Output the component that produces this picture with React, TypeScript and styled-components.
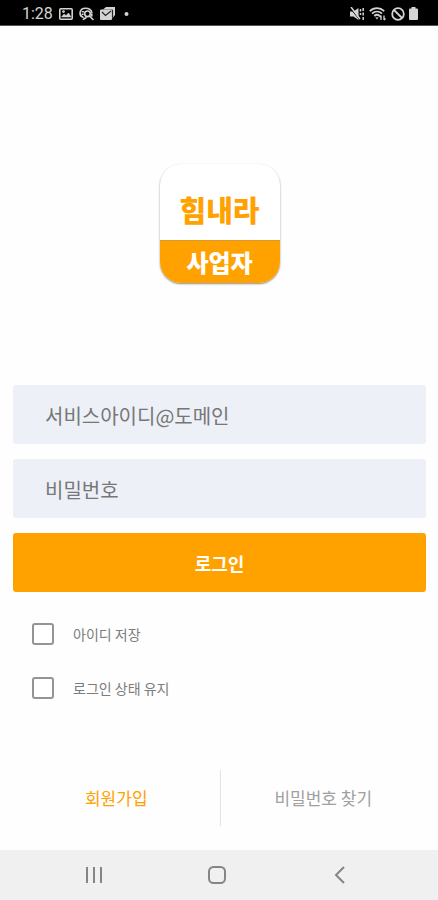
import React from "react";
import styled, { createGlobalStyle } from "styled-components";

const ORANGE = "#ffa200";

const GlobalStyle = createGlobalStyle`
  *, *::before, *::after { box-sizing: border-box; }
  body {
    margin: 0;
    background: #fefefe;
    font-family: "Noto Sans CJK KR", "Noto Sans", sans-serif;
  }
`;

const Screen = styled.div`
  display: flex;
  flex-direction: column;
  min-height: 100vh;
`;

const StatusBar = styled.header`
  display: flex;
  align-items: center;
  justify-content: space-between;
  height: 26px;
  padding: 2px 20px 0 22px;
  background: #000;
  border-bottom: 1px solid #555;
  color: #d4d4d4;
`;

const StatusGroup = styled.div<{ $gap: number }>`
  display: flex;
  align-items: center;
  gap: ${(p) => p.$gap}px;
`;

const Clock = styled.time`
  font: 16px/24px Roboto, sans-serif;
`;

const Main = styled.main`
  flex: 1;
  display: flex;
  flex-direction: column;
  padding: 138px 12px 24px 13px;
`;

const Logo = styled.h1`
  align-self: center;
  display: flex;
  flex-direction: column;
  width: 120px;
  height: 119px;
  margin: 0;
  overflow: hidden;
  border-radius: 21px;
  background: #fff;
  box-shadow: 0 1px 2px rgba(0, 0, 0, 0.45);
  font-weight: 900;
  text-align: center;
`;

const LogoTop = styled.span`
  flex: 1;
  padding-top: 14px;
  color: ${ORANGE};
  font-size: 29px;
  line-height: 62px;
`;

const LogoBottom = styled.span`
  height: 43px;
  border-top: 1px solid #d99a2b;
  background: ${ORANGE};
  color: #fff;
  font-size: 24px;
  line-height: 42px;
`;

const Form = styled.form`
  display: flex;
  flex-direction: column;
  margin-top: 102px;
`;

const Field = styled.input`
  width: 100%;
  height: 59px;
  margin-bottom: 15px;
  padding: 2px 32px 0;
  border: 0;
  border-radius: 3px;
  background: #edf0f7;
  color: #333;
  font: inherit;
  font-size: 20px;
  &::placeholder { color: #777; opacity: 1; }
`;

const LoginButton = styled.button`
  height: 59px;
  border: 0;
  border-radius: 3px;
  background: ${ORANGE};
  color: #fff;
  font: inherit;
  font-size: 18px;
  font-weight: 700;
`;

const Options = styled.div`
  display: flex;
  flex-direction: column;
  align-items: flex-start;
  gap: 30px;
  padding: 30px 19px 0;
`;

const Option = styled.label`
  display: flex;
  align-items: center;
  gap: 19px;
  color: #7c7c7c;
  font-size: 14px;
  line-height: 24px;
`;

const Checkbox = styled.input`
  appearance: none;
  width: 22px;
  height: 22px;
  margin: 0;
  border: 2px solid #949494;
  border-radius: 3px;
  background: #fff;
  &:checked { background: ${ORANGE}; }
`;

const Links = styled.nav`
  display: grid;
  grid-template-columns: 1fr 1fr;
  margin-top: auto;
`;

const FooterLink = styled.a<{ $primary?: boolean }>`
  color: ${(p) => (p.$primary ? ORANGE : "#a0a0a0")};
  font-size: 17px;
  line-height: 56px;
  text-align: center;
  text-decoration: none;
  & + & { border-left: 1px solid #e2e2e2; }
`;

const SystemBar = styled.nav`
  display: flex;
  align-items: center;
  justify-content: center;
  gap: 99px;
  height: 50px;
  padding-right: 4px;
  background: #f0f0f0;
`;

const SystemButton = styled.button`
  display: flex;
  padding: 0;
  border: 0;
  background: none;
  color: #858585;
`;

const StatusLeft = () => (
  <StatusGroup $gap={6}>
    <Clock>1:28</Clock>
    <svg width="14" height="12" viewBox="0 0 14 12" fill="none" stroke="currentColor" strokeWidth="1.6">
      <rect x="0.8" y="0.8" width="12.4" height="10.4" rx="1" />
      <path d="M2.5 9 5 6l2 1.5L9.5 5 12 9z" fill="currentColor" strokeWidth="0.5" />
      <circle cx="4.5" cy="3.6" r="0.6" />
    </svg>
    <svg width="15" height="14" viewBox="0 0 15 14" fill="none" stroke="currentColor" strokeWidth="1.6" strokeLinecap="round">
      <path d="M4 10.2C1.5 9.5.8 7.2 1.2 5 1.7 2.5 3.5 1.2 6.5 1.2c3.2 0 5.8 1.3 6.3 4.3" />
      <circle cx="8.5" cy="6.8" r="2.8" />
      <path d="m10.7 9.2 3.3 3.3M3.5 4.8h1M3.2 7.3h.8M4.5 12.3 7 10.8M12.8 7v2" />
    </svg>
    <svg width="15" height="13" viewBox="0 0 15 13" fill="currentColor">
      <path d="M3 2.5 6 0h9v8l-2.5 3V2.5z" />
      <rect y="2.5" width="12" height="10.5" rx="1" />
      <path d="m2 5 3.5 3.5L11 4M12.5 3v7" fill="none" stroke="#222" strokeWidth="1.2" />
    </svg>
    <svg width="12" height="6" viewBox="0 0 12 6" fill="currentColor">
      <circle cx="5.5" cy="3" r="2" />
    </svg>
  </StatusGroup>
);

const StatusRight = () => (
  <StatusGroup $gap={4}>
    <svg width="15" height="14" viewBox="0 0 15 14" fill="currentColor">
      <path d="M0 4.5h3.5L8.5 1v12L3.5 9.5H0z" />
      <path d="m0 1 9 11" stroke="#000" strokeWidth="1" />
      <path d="m1 0 9 12M10.5 2v2.5M10.5 6v2M13.2 1v3M13.2 5.5v3M13.2 10v3" fill="none" stroke="currentColor" strokeWidth="1.5" />
    </svg>
    <svg width="18" height="14" viewBox="0 0 18 14" fill="none" stroke="currentColor" strokeWidth="1.8">
      <path d="M.8 4.2C5 .2 11 .2 15.2 4.2M3 6.7c3-2.8 7-2.8 10 0M5.3 9c1.7-1.5 3.7-1.5 5.4 0" />
      <path d="m6.2 10.3 1.8 2.2 1.5-2z" fill="currentColor" stroke="none" />
      <path d="M12 13V8.5M10.5 10 12 8.5M15 8.5V13M16.5 11.5 15 13" strokeWidth="1.3" />
    </svg>
    <svg width="14" height="14" viewBox="0 0 14 14" fill="none" stroke="currentColor" strokeWidth="1.8">
      <circle cx="7" cy="7" r="5.8" />
      <path d="m3 3 8 8" />
    </svg>
    <svg width="9" height="13" viewBox="0 0 9 13" fill="currentColor">
      <path d="M2.5 0h4v1.5H8q1 0 1 1V12q0 1-1 1H1q-1 0-1-1V2.5q0-1 1-1h1.5z" />
    </svg>
  </StatusGroup>
);

export default function App() {
  return (
    <Screen>
      <GlobalStyle />
      <StatusBar>
        <StatusLeft />
        <StatusRight />
      </StatusBar>
      <Main>
        <Logo>
          <LogoTop>힘내라</LogoTop>
          <LogoBottom>사업자</LogoBottom>
        </Logo>
        <Form onSubmit={(e) => e.preventDefault()}>
          <Field type="text" aria-label="서비스아이디@도메인" placeholder="서비스아이디@도메인" />
          <Field type="password" aria-label="비밀번호" placeholder="비밀번호" />
          <LoginButton type="submit">로그인</LoginButton>
          <Options>
            <Option>
              <Checkbox type="checkbox" />
              아이디 저장
            </Option>
            <Option>
              <Checkbox type="checkbox" />
              로그인 상태 유지
            </Option>
          </Options>
        </Form>
        <Links>
          <FooterLink href="#join" $primary>회원가입</FooterLink>
          <FooterLink href="#password">비밀번호 찾기</FooterLink>
        </Links>
      </Main>
      <SystemBar>
        <SystemButton type="button" aria-label="최근 앱">
          <svg width="24" height="20" viewBox="0 0 24 20" stroke="currentColor" strokeWidth="2">
            <path d="M5 2v16M12 2v16M19 2v16" />
          </svg>
        </SystemButton>
        <SystemButton type="button" aria-label="홈">
          <svg width="24" height="20" viewBox="0 0 24 20" fill="none" stroke="currentColor" strokeWidth="2">
            <rect x="4" y="2" width="16" height="16" rx="4.5" />
          </svg>
        </SystemButton>
        <SystemButton type="button" aria-label="뒤로">
          <svg width="24" height="20" viewBox="0 0 24 20" fill="none" stroke="currentColor" strokeWidth="2">
            <path d="m16 2-8 8 8 8" />
          </svg>
        </SystemButton>
      </SystemBar>
    </Screen>
  );
}
